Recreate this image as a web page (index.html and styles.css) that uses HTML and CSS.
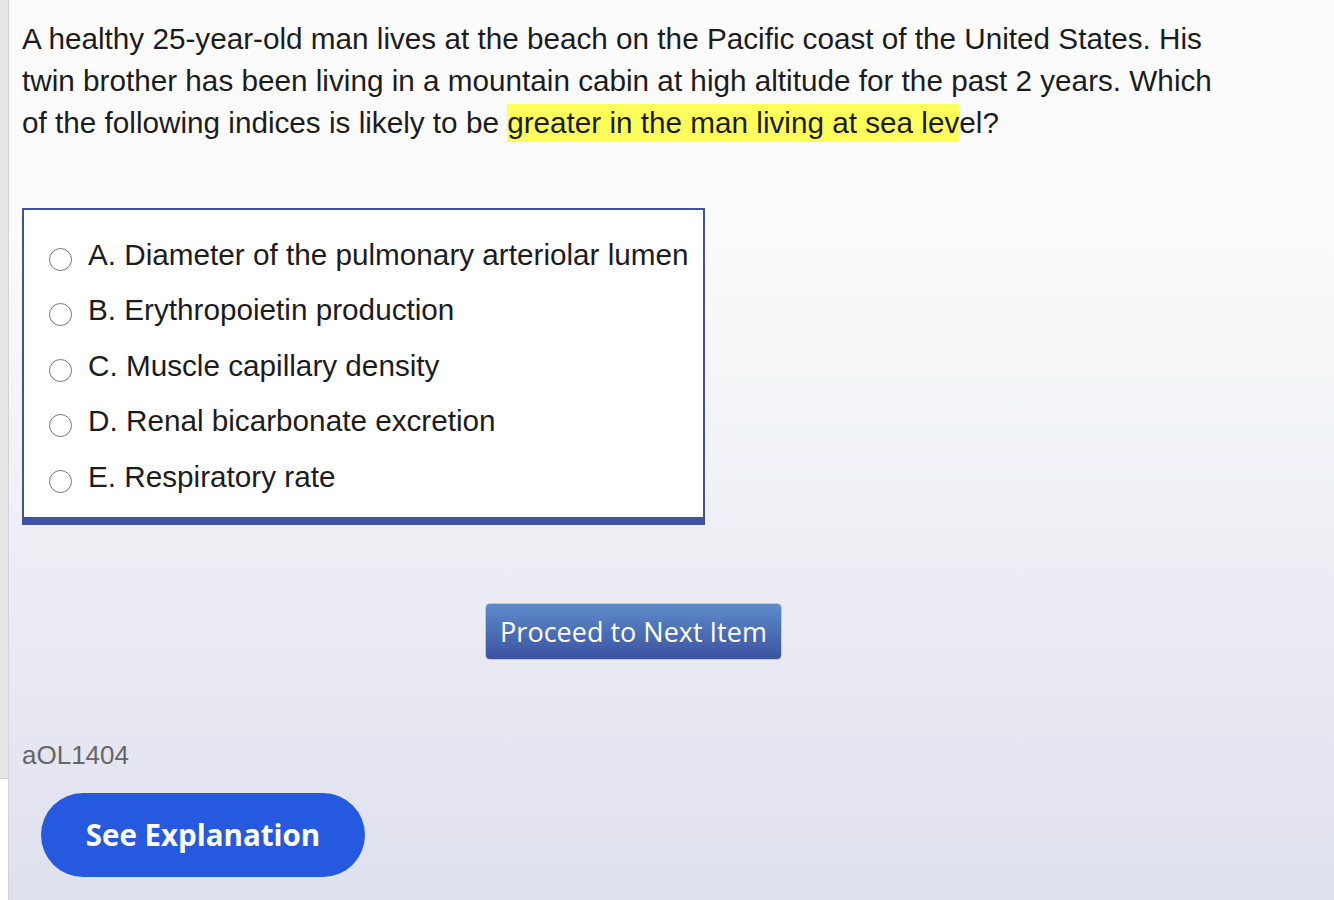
FILE: index.html
```html
<!DOCTYPE html>
<html>
<head>
<meta charset="utf-8">
<link rel="stylesheet" href="styles.css">
</head>
<body>
<div class="shell">
  <div class="sidebar">
    <div class="sidebar-top"></div>
    <div class="sidebar-bottom"></div>
  </div>
  <main class="main">
    <p class="question">A healthy 25-year-old man lives at the beach on the Pacific coast of the United States. His twin brother has been living in a mountain cabin at high altitude for the past 2 years. Which of the following indices is likely to be <span class="hl">greater in the man living at sea lev</span>el?</p>
    <div class="choices">
      <label class="choice"><span class="radio"></span><span class="choice-text">A. Diameter of the pulmonary arteriolar lumen</span></label>
      <label class="choice"><span class="radio"></span><span class="choice-text">B. Erythropoietin production</span></label>
      <label class="choice"><span class="radio"></span><span class="choice-text">C. Muscle capillary density</span></label>
      <label class="choice"><span class="radio"></span><span class="choice-text">D. Renal bicarbonate excretion</span></label>
      <label class="choice"><span class="radio"></span><span class="choice-text">E. Respiratory rate</span></label>
    </div>
    <div class="proceed-row">
      <button class="proceed">Proceed to Next Item</button>
    </div>
    <div class="qid">aOL1404</div>
    <button class="explain">See Explanation</button>
  </main>
</div>
</body>
</html>
```
FILE: styles.css
```css
html, body {
  margin: 0;
  padding: 0;
  height: 900px;
  overflow: hidden;
}
body {
  font-family: "Liberation Sans", Arial, sans-serif;
  color: #1c1c1c;
  background: #fbfbfb;
}
.shell {
  display: flex;
  height: 900px;
}
.sidebar {
  width: 8px;
  display: flex;
  flex-direction: column;
  border-right: 1px solid #d4d4d4;
  flex-shrink: 0;
}
.sidebar-top {
  height: 778px;
  background: #e6e6e6;
  border-bottom: 1px solid #d0d0d0;
}
.sidebar-bottom {
  flex: 1;
  background: #ffffff;
}
.main {
  flex: 1;
  padding: 18px 0 0 13px;
  background: linear-gradient(to bottom, #fbfbfb 0px, #fbfbfb 230px, #dfe0ee 900px);
}
.question {
  margin: 0;
  font-size: 29.7px;
  line-height: 42px;
  width: 1200px;
}
.hl {
  background: #ffff5c;
  padding: 2px 0 3px 0;
}
.choices {
  margin-top: 64px;
  width: 679px;
  background: #ffffff;
  border: 2px solid #3f51a0;
  border-bottom-width: 8px;
  padding: 17px 0 12px 0;
}
.choice {
  display: flex;
  align-items: center;
  height: 55.5px;
  padding-left: 25px;
}
.radio {
  box-sizing: border-box;
  width: 23px;
  height: 23px;
  border: 1.5px solid #777777;
  border-radius: 50%;
  background: #fff;
  margin-top: 9px;
  flex-shrink: 0;
}
.choice-text {
  margin-left: 16px;
  font-size: 29.7px;
}
.proceed-row {
  display: flex;
  justify-content: center;
  margin-top: 79px;
  padding-right: 89px;
}
.proceed {
  width: 295px;
  height: 55px;
  border: none;
  border-radius: 4px;
  background: linear-gradient(to bottom, #5d8cc9, #3c52a2);
  color: #ffffff;
  font-family: "Open Sans", sans-serif;
  font-size: 27px;
  padding: 0;
  box-shadow: 0 0 0 1px rgba(60, 80, 160, 0.25);
}
.qid {
  margin-top: 82px;
  font-size: 26px;
  color: #666666;
  line-height: 28px;
}
.explain {
  display: block;
  margin: 24px 0 0 19px;
  width: 324px;
  height: 84px;
  border: none;
  border-radius: 42px;
  background: #2459e0;
  color: #ffffff;
  font-family: "Open Sans", sans-serif;
  font-weight: 700;
  font-size: 29.5px;
  padding: 0;
}
```
